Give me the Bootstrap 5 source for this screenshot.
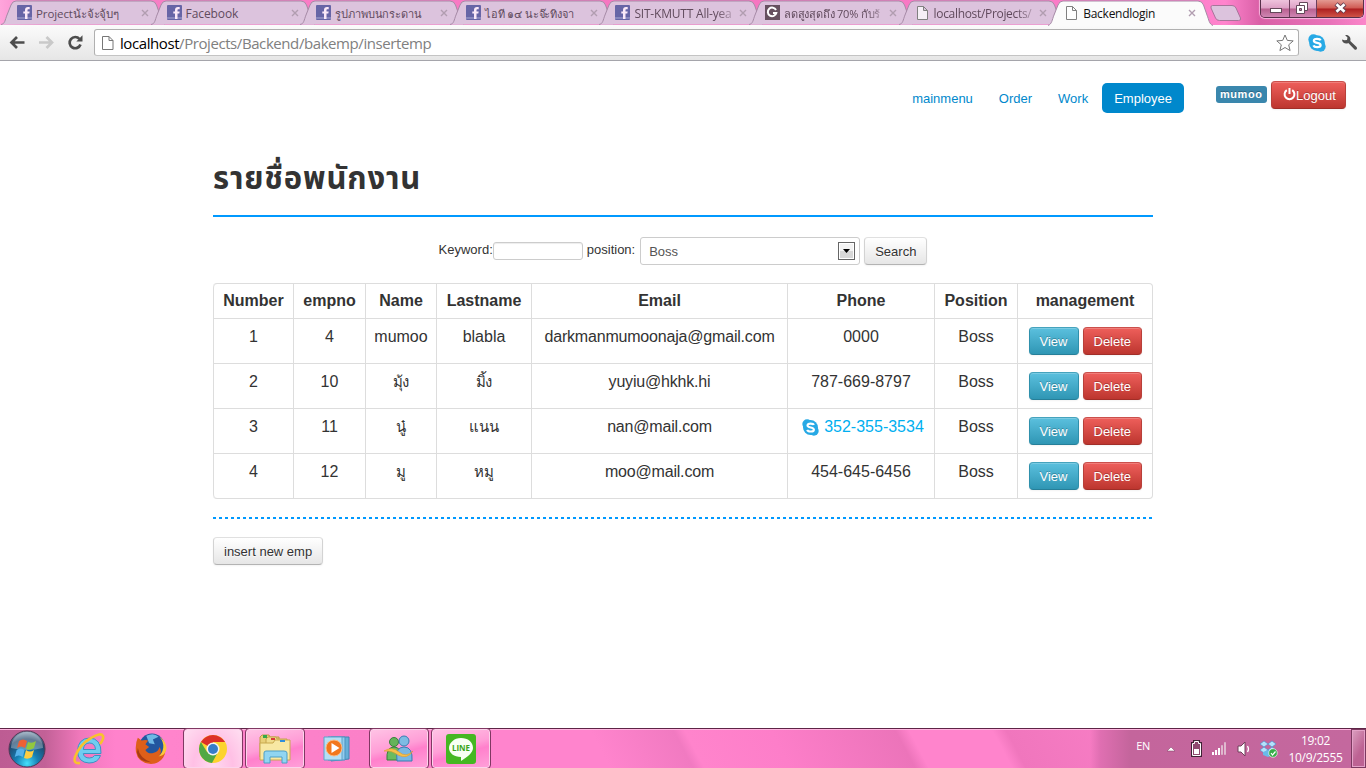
<!DOCTYPE html>
<html lang="th">
<head>
<meta charset="utf-8">
<meta name="viewport" content="width=device-width, initial-scale=1">
<title>Backendlogin</title>
<link href="https://cdn.jsdelivr.net/npm/bootstrap@5.3.0/dist/css/bootstrap.min.css" rel="stylesheet">
<style>
body{width:1366px;height:768px;overflow:hidden;background:#fff;font-family:"Liberation Sans",sans-serif;font-size:13px;line-height:18px;color:#333}
svg{display:block}
/* browser frame */
.tabstrip{height:25px;background:linear-gradient(90deg,#ffa5dc 0,#f480c4 40px,#fb7cc6 300px,#f574bf 700px,#fd7dca 1190px,#ff84cd 1225px,#d95fa6 1260px,#e873b9 1330px,#fb86ca)}
.btab{width:149.6px;height:25px;flex:none;font:12px "Open Sans","Noto Sans",sans-serif;color:#614b5d;padding:2px 0 0 17px;letter-spacing:-.1px}
.btab .shape{position:absolute;left:0;top:0;overflow:visible}
.btab .fav{width:15px;height:15px;margin-top:3px;flex:none}
.btab .lbl{width:101px;margin-left:4px;line-height:23px;height:23px;white-space:nowrap}
.btab .lbl.th{font-size:11px}
.btab .lbl.fade-end{-webkit-mask-image:linear-gradient(90deg,#000 82px,rgba(0,0,0,.25) 100px);letter-spacing:-.2px}
.btab .x{margin:7px 0 0 4px}
.btab.on{color:#111}
.toolbar{height:36px;background:linear-gradient(#fbfbfb,#e6e6e6);border-bottom:1px solid #a5a5ab;padding-left:7px}
.omni{width:1205px;height:27px;margin-left:9px;background:#fff;border:1px solid #b0b0b0;border-bottom-color:#c4c4c4;border-radius:3px;font:15px "Open Sans","Noto Sans",sans-serif;color:#808080;padding:0 4px 0 7px}
.omni b{font-weight:400;color:#000}
.url{letter-spacing:-.42px;margin-left:6px;line-height:24px}
.winctl{right:2px;top:0;height:18px;border:1px solid #57304a;border-top:0;border-radius:0 0 5px 5px;overflow:hidden;box-shadow:0 0 1px 1px #f7b8df}
.winctl>span{height:17px;background:linear-gradient(#eec3dc 0,#dda0c5 48%,#b8608f 52%,#cf86b3);border-right:1px solid #6c3f5c}
.winctl>span:last-child{border:0;background:linear-gradient(#e49a92 0,#cf5a52 48%,#ad1f20 52%,#cf5347)}
/* page */
.page{height:667px}
.topnav a{padding:7px 12px 5px;line-height:18px;height:30px;color:#08c;text-decoration:none;border-radius:5px}
.topnav a.active{background:#08c;color:#fff}
.user-tag{background:#3a87ad;color:#fff;font-size:11px;letter-spacing:.55px;font-weight:700;line-height:14px;padding:1px 3px 2px 4px;border-radius:3px;text-shadow:0 -1px 0 rgba(0,0,0,.25);height:17px;width:51px}
.b2{display:inline-block;height:28px;padding:5px 10px 3px;font-size:13px;line-height:18px;border:1px solid #ccc;border-color:#e0e0e0 #d3d3d3 #b3b3b3;border-radius:4px;background:linear-gradient(#fff,#e6e6e6);color:#333;text-shadow:0 1px 1px rgba(255,255,255,.75);box-shadow:inset 0 1px 0 rgba(255,255,255,.2),0 1px 2px rgba(0,0,0,.05);white-space:nowrap}
.b2.inf{background:linear-gradient(#5bc0de,#2f96b4);border-color:#46a3bd #2f90ac #267f99;color:#fff;text-shadow:0 -1px 0 rgba(0,0,0,.25);width:50px}
.b2.dng{background:linear-gradient(#ee5f5b,#bd362f);border-color:#cb504c #b8403a #a12e28;color:#fff;text-shadow:0 -1px 0 rgba(0,0,0,.25);width:59px}
.wrap{width:940px}
.ttl{font:700 31px/36px "Liberation Sans","Noto Sans Thai","Loma",sans-serif;letter-spacing:.85px;margin:0;color:#333}
.rule{height:2px;background:#0099ff}
.dashes{height:2px;background:repeating-linear-gradient(90deg,#0099ff 0 3px,#fff 3px 6px)}
.kw{width:90px;height:18px;border:1px solid #ccc;border-radius:3px;box-shadow:inset 0 1px 1px rgba(0,0,0,.075)}
.sel{width:220px;height:28px;border:1px solid #ccc;border-radius:3px;padding:4px 4px 0 8px;color:#555}
.arrow{width:17px;height:18px;border:1px solid #666;background:linear-gradient(#f3f3f3 50%,#d8d8d8 50%);box-shadow:inset 0 0 0 1px #fff}
.emp{table-layout:fixed;width:940px;border-collapse:separate;border-spacing:0;border:1px solid #ddd;border-left:0;border-radius:4px;font-size:16px;line-height:18px;text-align:center}
.emp th{height:34px;padding:8px 0 0;border-left:1px solid #ddd;vertical-align:top;font-weight:700}
.emp td{height:45px;padding:9px 0 0;border-left:1px solid #ddd;border-top:1px solid #ddd;vertical-align:top;white-space:nowrap}
.emp td:last-child{padding-top:8px}
.emp td:nth-child(5){letter-spacing:-.19px}
.emp td.th{font-size:15px;letter-spacing:-.3px}
.emp tr:first-child th:first-child{border-top-left-radius:4px}
.emp tr:last-child td:first-child{border-bottom-left-radius:4px}
/* taskbar */
.taskbar{height:40px;border-top:1px solid #5d2446;box-shadow:inset 0 1px 0 #ffb5df;background:linear-gradient(90deg,#bd5c93 0,#c26197 45px,#f078bb 80px,#ff82cc 115px,#ff84cc 170px,#fb80c8 360px,transparent 500px,transparent 1090px,#e06fb2 1100px,#c4659c 1130px,#c4689e 1350px),linear-gradient(62deg,#ff84cd 0 44%,#f17ac1 50%,#ff84cc 50.8%,#fd7ec9 57%,#ec74ba 66%,#ff84cc 67%,#ff84cc 73%,#f076bd 74%,#fb80c8 85%)}
.tk{width:60px;height:39px;flex:none}
.tk.open{border:1px solid #fcd3eb;border-radius:3px;outline:1px solid #803863;outline-offset:0;background:linear-gradient(165deg,#ffc3e5 0,#ff9ed7 45%,#ff80cc 60%,#ffa0d9);width:58px;margin-right:1px}
.tk.cur{background:radial-gradient(ellipse at 50% 100%,#ffd9f0,#ffc0e5 50%,#ffdef1)}
.tray{font:12px "Open Sans","Noto Sans",sans-serif;color:#fff;letter-spacing:-.3px}
.peek{width:15px;height:39px;border:1px solid #7c3960;box-shadow:inset 0 0 0 1px #e4a2c8;background:linear-gradient(120deg,#dba0c0,#bd6293 60%)}
</style>
</head>
<body>
<svg width="0" height="0" class="position-absolute">
 <defs>
  <symbol id="fb" viewBox="0 0 15 15"><rect width="15" height="15" rx="1" fill="#6765a6"/><path d="M0 12h15v2H0z" fill="#8887bd"/><path d="M8 14V8.600H6.300V6.400H8V5c0-2 1-3 3-3h1.700v2.200h-1.200c-.8 0-1 .3-1 1v1.200h2.200l-.4 2.200h-1.800V14z" fill="#fbe9f8"/></symbol>
  <symbol id="doc" viewBox="0 0 15 15"><path d="M2.500 1.500h6l4 4v9h-10zM8.500 1.500v4h4" fill="#fff" fill-opacity=".75" stroke="#808080"/></symbol>
  <symbol id="skype" viewBox="0 0 16 16"><circle cx="8" cy="8" r="7" fill="#27a9e5"/><circle cx="4.800" cy="4.800" r="4.500" fill="#27a9e5"/><circle cx="11.200" cy="11.200" r="4.500" fill="#27a9e5"/><path d="M11.100 5.700C10.600 4 5.200 3.700 5.200 6c0 2.500 6 1.400 6 4 0 2.300-5.600 2.300-6.300.2" fill="none" stroke="#fff" stroke-width="2"/></symbol>
  <symbol id="cross" viewBox="0 0 8 8"><path d="M1 1l6 6M7 1L1 7" stroke="#b19db0" stroke-width="1.400"/></symbol>
  <symbol id="tabshape" viewBox="0 0 165 25"><path d="M1 24.500C5 24 5 20 7 15L11 5Q12.500 1 16 1H151Q155 1 156.500 5L160 15C162 20 162 24 166 24.500" fill="#dcc3dd" stroke="#a68aa6"/></symbol>
 </defs>
</svg>

<header>
 <div class="tabstrip d-flex position-relative">
  <div class="btab position-relative d-flex"><svg class="shape" width="165" height="25"><use href="#tabshape"/></svg><svg class="fav position-relative"><use href="#fb"/></svg><span class="lbl th position-relative" style="font-size:11.5px">Projectน้ะจ้ะจุ้บๆ</span><svg class="x position-relative" width="8" height="8"><use href="#cross"/></svg></div>
  <div class="btab position-relative d-flex"><svg class="shape" width="165" height="25"><use href="#tabshape"/></svg><svg class="fav position-relative"><use href="#fb"/></svg><span class="lbl position-relative">Facebook</span><svg class="x position-relative" width="8" height="8"><use href="#cross"/></svg></div>
  <div class="btab position-relative d-flex"><svg class="shape" width="165" height="25"><use href="#tabshape"/></svg><svg class="fav position-relative"><use href="#fb"/></svg><span class="lbl th position-relative">รูปภาพบนกระดาน</span><svg class="x position-relative" width="8" height="8"><use href="#cross"/></svg></div>
  <div class="btab position-relative d-flex"><svg class="shape" width="165" height="25"><use href="#tabshape"/></svg><svg class="fav position-relative"><use href="#fb"/></svg><span class="lbl th position-relative">ไอที ๑๔ นะจ๊ะทิงจา</span><svg class="x position-relative" width="8" height="8"><use href="#cross"/></svg></div>
  <div class="btab position-relative d-flex"><svg class="shape" width="165" height="25"><use href="#tabshape"/></svg><svg class="fav position-relative"><use href="#fb"/></svg><span class="lbl fade-end position-relative">SIT-KMUTT All-yea</span><svg class="x position-relative" width="8" height="8"><use href="#cross"/></svg></div>
  <div class="btab position-relative d-flex"><svg class="shape" width="165" height="25"><use href="#tabshape"/></svg><svg class="fav position-relative" viewBox="0 0 15 15"><rect width="15" height="15" fill="#66505f"/><path d="M11 5A4.300 4.300 0 1 0 11.300 8H8" fill="none" stroke="#fff" stroke-width="2"/></svg><span class="lbl th fade-end position-relative">ลดสูงสุดถึง 70% กับร้</span><svg class="x position-relative" width="8" height="8"><use href="#cross"/></svg></div>
  <div class="btab position-relative d-flex"><svg class="shape" width="165" height="25"><use href="#tabshape"/></svg><svg class="fav position-relative"><use href="#doc"/></svg><span class="lbl fade-end position-relative" style="letter-spacing:-.32px">localhost/Projects/</span><svg class="x position-relative" width="8" height="8"><use href="#cross"/></svg></div>
  <div class="btab on position-relative d-flex"><svg class="shape" width="165" height="25" viewBox="0 0 165 25"><path d="M1 25.500C5 24 5 20 7 15L11 5Q12.500 1 16 1H151Q155 1 156.500 5L160 15C162 20 162 24 166 25.500" fill="#fbfbfb" stroke="#a68aa6"/></svg><svg class="fav position-relative"><use href="#doc"/></svg><span class="lbl position-relative" style="letter-spacing:-.25px">Backendlogin</span><svg class="x position-relative" width="8" height="8"><use href="#cross"/></svg></div>
  <svg class="mt-1" style="margin-left:13px" width="33" height="18" viewBox="0 0 33 18"><path d="M2.500 1.500H22Q25 1.500 26 4l4.500 10q1 2.500-2 2.500H9.500Q6.500 16.500 5.500 14L1 4Q.5 1.500 2.500 1.500z" fill="#dcc3dd" stroke="#a8749a"/></svg>
  <div class="winctl position-absolute d-flex">
   <span style="width:29px"><svg width="28" height="17"><rect x="9.500" y="8.500" width="11" height="4" fill="#fff" stroke="#64485a"/></svg></span>
   <span style="width:27px"><svg width="26" height="17"><path d="M9.500 2.500h8v8h-8z" fill="#fff" stroke="#64485a"/><path d="M6.500 5.500h8v8h-8z" fill="#fff" stroke="#64485a"/><path d="M9.500 8.500h2v2h-2z" fill="#c77fae" stroke="#64485a"/></svg></span>
   <span style="width:46px"><svg width="46" height="17"><path d="M19 4l9 8M28 4l-9 8" stroke="#664050" stroke-width="4.500"/><path d="M19.500 4.300l8 7.400M27.500 4.300l-8 7.400" stroke="#fff" stroke-width="2.700"/></svg></span>
  </div>
 </div>
 <div class="toolbar d-flex align-items-center">
  <svg width="78" height="20" viewBox="0 0 78 20"><path d="M17.500 9.500H4.500M10 4L4.500 9.500l5.500 5.500" fill="none" stroke="#4d4d4d" stroke-width="2.700"/><path d="M32 9.500h13M39.500 4l5.500 5.500-5.500 5.500" fill="none" stroke="#c9c9c9" stroke-width="2.700"/><path d="M72.500 6A5.600 5.600 0 1 0 73.500 11.500" fill="none" stroke="#4d4d4d" stroke-width="2.700"/><path d="M75.500 2.300V8.500h-6.200z" fill="#4d4d4d"/></svg>
  <div class="omni d-flex align-items-center"><svg width="12" height="16" viewBox="0 0 12 16"><path d="M.5 1.500h6.500l4 4v9H.5zM7 1.500v4h4" fill="#fff" stroke="#777"/></svg><span class="url"><b>localhost</b>/Projects/Backend/bakemp/insertemp</span>
   <svg class="ms-auto" width="18" height="18" viewBox="0 0 18 18"><path d="M9 1l2.300 5.400 5.900.5-4.500 3.900 1.400 5.800L9 13.500l-5.100 3.100 1.400-5.800L.8 6.900l5.900-.5z" fill="#fff" stroke="#777" stroke-linejoin="round"/></svg></div>
  <svg class="flex-shrink-0" width="18" height="18" style="margin-left:9px"><use href="#skype"/></svg>
  <svg class="flex-shrink-0" style="margin-left:15px" width="17" height="17" viewBox="0 0 17 17"><path d="M1 5.500C1 9 5 10.500 7.300 9l6 6.200q1.200 1 2.300 0 1-1.200 0-2.300L9.300 7C10.300 3.500 7.500.6 4.200 1.200L6.500 3.600 6 6 3.500 6.300z" fill="#505050"/></svg>
 </div>
</header>

<main class="page">
 <div class="d-flex justify-content-end pe-0" style="padding-top:20px;height:93px">
  <nav class="topnav d-flex" style="gap:2px;margin:2px 32px 0 0"><a href="#">mainmenu</a><a href="#">Order</a><a href="#">Work</a><a href="#" class="active">Employee</a></nav>
  <span class="user-tag" style="margin:5px 4px 0 0">mumoo</span>
  <span class="b2 dng d-flex" style="width:75px;margin-right:20px;padding-left:11px"><svg width="13" height="14" viewBox="0 0 13 14" class="flex-shrink-0"><path d="M3.800 3.200A4.900 4.900 0 1 0 9.200 3.200" fill="none" stroke="#fff" stroke-width="2"/><path d="M6.500 1v6" stroke="#fff" stroke-width="2"/></svg>Logout</span>
 </div>
 <div class="wrap mx-auto">
  <h1 class="ttl" style="padding-top:7px;height:61px">รายชื่อพนักงาน</h1>
  <div class="rule"></div>
  <form class="d-flex justify-content-center" style="margin-top:20px;height:46px">
   <span style="margin-top:4px">Keyword:</span><span class="kw" style="margin:5px 4px 0 0"></span><span style="margin:4px 5px 0 0">position:</span>
   <span class="sel d-flex justify-content-between" style="margin-right:4px;padding-top:5px"><span>Boss</span><span class="arrow" style="margin-top:-1px"><svg width="15" height="16"><path d="M4 6h7L7.500 10z"/></svg></span></span>
   <span class="b2">Search</span>
  </form>
  <table class="emp">
   <colgroup><col style="width:80px"><col style="width:72px"><col style="width:71px"><col style="width:95px"><col style="width:256px"><col style="width:147px"><col style="width:83px"><col></colgroup>
   <tr><th>Number</th><th>empno</th><th>Name</th><th>Lastname</th><th>Email</th><th>Phone</th><th>Position</th><th>management</th></tr>
   <tr><td>1</td><td>4</td><td>mumoo</td><td>blabla</td><td>darkmanmumoonaja@gmail.com</td><td>0000</td><td>Boss</td><td><div class="d-flex justify-content-center gap-1"><span class="b2 inf">View</span><span class="b2 dng">Delete</span></div></td></tr>
   <tr><td>2</td><td>10</td><td class="th">มุ้ง</td><td class="th">มิ้ง</td><td>yuyiu@hkhk.hi</td><td>787-669-8797</td><td>Boss</td><td><div class="d-flex justify-content-center gap-1"><span class="b2 inf">View</span><span class="b2 dng">Delete</span></div></td></tr>
   <tr><td>3</td><td>11</td><td class="th">นู๋</td><td class="th">แนน</td><td>nan@mail.com</td><td><div class="d-flex justify-content-center" style="color:#00aff0;padding-left:4px"><svg width="17" height="17" style="margin:1px 5px 0 0"><use href="#skype"/></svg>352-355-3534</div></td><td>Boss</td><td><div class="d-flex justify-content-center gap-1"><span class="b2 inf">View</span><span class="b2 dng">Delete</span></div></td></tr>
   <tr><td>4</td><td>12</td><td class="th">มู</td><td class="th">หมู</td><td>moo@mail.com</td><td>454-645-6456</td><td>Boss</td><td><div class="d-flex justify-content-center gap-1"><span class="b2 inf">View</span><span class="b2 dng">Delete</span></div></td></tr>
  </table>
  <div class="dashes" style="margin:18px 0"></div>
  <span class="b2">insert new emp</span>
 </div>
</main>

<footer class="taskbar d-flex">
 <div class="tk d-flex align-items-center justify-content-center" style="width:54px"><svg width="38" height="38" viewBox="0 0 38 38"><defs><radialGradient id="orb" cx=".5" cy=".9" r=".9"><stop offset="0" stop-color="#45e0fb"/><stop offset=".35" stop-color="#167fb4"/><stop offset=".75" stop-color="#214468"/><stop offset="1" stop-color="#90a8bd"/></radialGradient></defs><circle cx="19" cy="19" r="18" fill="url(#orb)" stroke="#553753"/><path d="M3 18a16 16 0 0 1 32 0Q19 22 3 18z" fill="#fff" opacity=".3"/><path d="M11 11q4-3 8 0l-2 7q-4-3-8 0z" fill="#ee6035"/><path d="M20 12q4 2 8-1l-2 7q-4 3-8 1z" fill="#92c83e"/><path d="M8.700 20q4-3 8 0l-2 7q-4-3-8 0z" fill="#55b2ea"/><path d="M18 20q4 3 8 0l-2 7q-4 3-8 1z" fill="#fdcd40"/></svg></div>
 <div class="tk d-flex align-items-center justify-content-center" style="margin-left:5px"><svg width="34" height="32" viewBox="0 0 34 32"><path d="M12 16.500H23.500Q23 10 17.500 10 12 10 11.300 16.500zM11.300 20.500Q12 25 17.500 25q3.500 0 5-2.500h6Q26 30 17 30 6 29.500 5.500 18 6 5.500 17.500 5q12 .5 11.500 15.500z" fill="#6fcdf1" fill-rule="evenodd" stroke="#3a93c4"/><path d="M8 30Q1 31 3 24 8 11 19 5 29-1 31 3q1 3-3 8" fill="none" stroke="#f9c22c" stroke-width="2.600"/></svg></div>
 <div class="tk d-flex align-items-center justify-content-center" style="margin-left:2px"><svg width="32" height="32" viewBox="0 0 34 34"><circle cx="18" cy="14" r="13.500" fill="#23569f"/><path d="M12 3q8-4 13 1l-6 3 2 5-6-1z" fill="#6fb8e5"/><path d="M3 5l4 3q4-1 7 0l-3 4 4 3-4 3q3 5 9 3 5-1 6-6 3 4 0 8 5-3 5-11 3 8-1 14-5 7-13 7Q3 32 1 20 0 11 3 5z" fill="#de5f1a"/><path d="M26 4q5 6 4 12-1 6-5 9 8-1 8.500-9Q33 9 26 4z" fill="#fac83c"/><path d="M3 16q2 11 14 15-13 0-15-10z" fill="#a83c14"/></svg></div>
 <div class="tk open cur d-flex align-items-center justify-content-center" style="margin-left:3px"><svg width="30" height="30" viewBox="0 0 30 30"><circle cx="15" cy="15" r="14" fill="#fcd32e"/><path d="M15 15L2.900 8A14 14 0 0 1 27.100 8H15z" fill="#dd3028"/><path d="M2.900 8A14 14 0 0 0 14 29l6-11-5 3-6-3z" fill="#50a844"/><circle cx="15" cy="15" r="6.500" fill="#f5f5f5"/><circle cx="15" cy="15" r="5" fill="#377dc9"/></svg></div>
 <div class="tk open d-flex align-items-center justify-content-center" style="margin-left:3px"><svg width="34" height="30" viewBox="0 0 34 30"><path d="M2 3l2-2h7l1 2h9v20H2z" fill="#e8cf78" stroke="#bd9c44"/><path d="M8 5l2-2h8l1 2h10v20H8z" fill="#f1dd8c" stroke="#c4a34c"/><path d="M2 9h13l2-3h15v20H2z" fill="#f8e8a3" stroke="#c8a94e"/><path d="M5 1h4v3H5z" fill="#37a94b"/><path d="M13 4h4v2h-4z" fill="#d73a3a"/><path d="M22 6h5v2h-5z" fill="#2f8edb"/><path d="M6 29V19q0-2 2-2h18q3 0 3 2v10h-5v-6H12v6z" fill="#90d5f2" stroke="#4d9fc7"/></svg></div>
 <div class="tk d-flex align-items-center justify-content-center" style="margin-left:2px"><svg width="28" height="28" viewBox="0 0 28 28"><path d="M8 2h18v22l-18 2z" fill="#66afd8" stroke="#4485b3"/><path d="M5 2h17v23H5z" fill="#94cced" stroke="#4d93bf"/><path d="M1 2h18v23H1z" fill="#b4dff5" stroke="#5da2cb"/><circle cx="11" cy="13" r="8" fill="#f2771c" stroke="#f9bb86"/><path d="M8.500 8v10l8-5z" fill="#fff"/></svg></div>
 <div class="tk open d-flex align-items-center justify-content-center" style="margin-left:3px"><svg width="32" height="28" viewBox="0 0 32 28"><circle cx="11" cy="7" r="4.500" fill="#64b35a" stroke="#38813a"/><path d="M4 25q-1-13 7-13t7 13z" fill="#6abb60" stroke="#38813a"/><circle cx="21" cy="6" r="5" fill="#7dbbe3" stroke="#397db2"/><path d="M14 26q-2-14 7-14t8 14z" fill="#78b7e3" stroke="#397db2"/><path d="M1 16q8-5 15 1t14-1q-6 9-15 4-7-5-14-4z" fill="#f7c04a" stroke="#dd9a2b" stroke-width=".6"/></svg></div>
 <div class="tk open d-flex align-items-center justify-content-center" style="margin-left:3px"><svg width="30" height="30" viewBox="0 0 30 30"><rect width="30" height="30" rx="3" fill="#45b722"/><path d="M15 4c7 0 12 4 12 10 0 5-6 9-12 13v-4C8 23 3 19 3 14S8 4 15 4z" fill="#f8fff4"/><text x="15" y="17" text-anchor="middle" font-family="Open Sans" font-weight="700" font-size="8" textLength="18" fill="#3aa51c">LINE</text></svg></div>
 <div class="tray ms-auto d-flex">
  <span style="margin:9px 16px 0 0;font-size:11px">EN</span>
  <svg width="114" height="39" viewBox="0 0 114 39"><path d="M1 22l4-4 4 4z" fill="#fff" stroke="#7a3c5e" stroke-width=".5"/><path d="M26.500 14.500h2v-2h4v2h2v12h-8z" fill="#8f4a70" stroke="#3f2234" stroke-width="3"/><path d="M26.500 14.500h2v-2h4v2h2v12h-8z" fill="#8f4a70" stroke="#fff"/><path d="M28 20h5v5h-5z" fill="#fff"/><path d="M46 23h2v3h-2zM49 21h2v5h-2zM52 19h2v7h-2z" fill="#fff"/><path d="M55.500 16.500h1v9h-1zM58.500 13.500h1v12h-1z" fill="#b987a2" stroke="#dfb9ce"/><path d="M72 17h3l4-4v14l-4-4h-3z" fill="#fff" stroke="#71405b"/><path d="M81.500 17q2 3 0 6" fill="none" stroke="#fff" stroke-width="1.300"/><path d="M98 12l4 3-4 3-4-3zM106 12l4 3-4 3-4-3zM98 18l4 3-4 3-4-3zM106 18l4 3-4 3-4-3z" fill="#b5e2fb" stroke="#3f8fd0" stroke-width=".6"/><path d="M97 23l5-2 5 2v3l-5 2-5-2z" fill="#6ab9ea"/><circle cx="107" cy="24" r="4.300" fill="#36ad47" stroke="#fff" stroke-width=".6"/><path d="M105 24l1.500 2 3-3.500" fill="none" stroke="#fff" stroke-width="1.200"/></svg>
  <div class="text-center" style="width:63px;line-height:17px;padding-top:3px;margin:0 4px 0 4px">19:02<br>10/9/2555</div>
  <div class="peek"></div>
 </div>
</footer>
<script src="https://cdn.jsdelivr.net/npm/bootstrap@5.3.0/dist/js/bootstrap.bundle.min.js"></script>
</body>
</html>
